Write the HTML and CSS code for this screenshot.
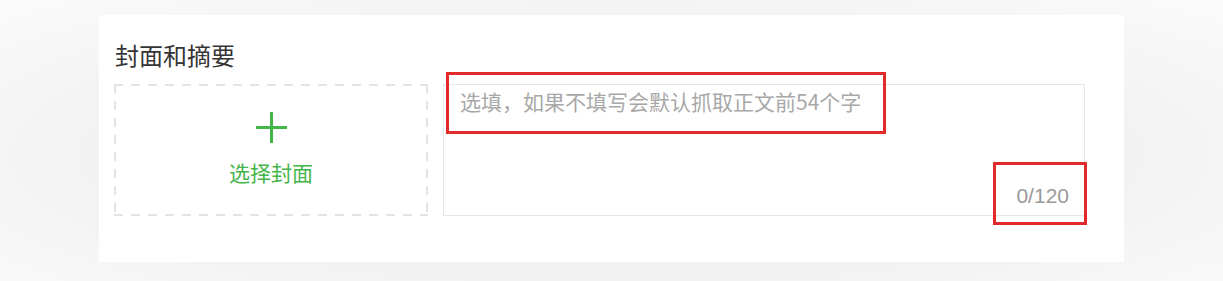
FILE: index.html
```html
<!DOCTYPE html>
<html>
<head>
    <meta charset="UTF-8">
    <title>封面和摘要</title>
    <link rel="stylesheet" href="styles.css">
</head>
<body>
    <div class="card">
        <h2 class="card-title">封面和摘要</h2>
        <div class="cover-row">
            <div class="cover-picker">
                <svg class="plus" width="31" height="31" viewBox="0 0 31 31">
                    <path d="M15.5 0 V31 M0 15.5 H31" stroke="#44b549" stroke-width="3" fill="none"/>
                </svg>
                <div class="cover-label">选择封面</div>
            </div>
            <div class="digest">
                <textarea class="digest-input" placeholder="选填，如果不填写会默认抓取正文前54个字"></textarea>
                <span class="digest-count">0/120</span>
                <!-- annotation marks -->
                <div class="mark mark-placeholder"></div>
                <div class="mark mark-count"></div>
            </div>
        </div>
    </div>
</body>
</html>
```

FILE: styles.css
```css
html, body {
    height: 100%;
}
body {
    margin: 0;
    font-family: "Noto Sans CJK SC", "Liberation Sans", sans-serif;
    background: radial-gradient(ellipse at 50% 55%, #f1f1f1 55%, #fbfbfb 100%);
    padding-top: 15px;
    box-sizing: border-box;
}
.card {
    margin-left: 99px;
    width: 1025px;
    height: 247px;
    box-sizing: border-box;
    padding: 25px 15px 0 15px;
    background: #fff;
}
.card-title {
    margin: 0 0 14px 1px;
    font-size: 24px;
    font-weight: normal;
    line-height: 30px;
    color: #353535;
}
.cover-row {
    display: flex;
    gap: 15px;
}
/* dashed border drawn with gradients to get longer dashes */
.cover-picker {
    width: 314px;
    height: 132px;
    box-sizing: border-box;
    padding-top: 28px;
    display: flex;
    flex-direction: column;
    align-items: center;
    background:
        repeating-linear-gradient(to right, #e3e3e3 0 9px, transparent 9px 17px) left top / 100% 2px no-repeat,
        repeating-linear-gradient(to right, #e3e3e3 0 9px, transparent 9px 17px) left bottom / 100% 2px no-repeat,
        repeating-linear-gradient(to bottom, #e3e3e3 0 9px, transparent 9px 17px) left top / 2px 100% no-repeat,
        repeating-linear-gradient(to bottom, #e3e3e3 0 9px, transparent 9px 17px) right top / 2px 100% no-repeat;
}
.cover-label {
    margin-top: 17px;
    font-size: 21px;
    line-height: 24px;
    color: #44b549;
}
.digest {
    position: relative;
    width: 642px;
    height: 132px;
}
.digest-input {
    display: block;
    width: 100%;
    height: 100%;
    box-sizing: border-box;
    margin: 0;
    border: 1px solid #e5e5e5;
    padding: 4px 16px;
    font-family: inherit;
    font-size: 21px;
    line-height: 24px;
    color: #353535;
    resize: none;
    outline: none;
}
.digest-input::placeholder {
    color: #a8a8a8;
}
.digest-count {
    position: absolute;
    right: 16px;
    bottom: 8px;
    font-family: "Liberation Sans", sans-serif;
    font-size: 21px;
    line-height: 24px;
    color: #9a9a9a;
}
.mark {
    position: absolute;
    border: 3px solid #e22a2a;
    box-sizing: border-box;
}
.mark-placeholder {
    left: 3px;
    top: -12px;
    width: 440px;
    height: 62px;
}
.mark-count {
    left: 550px;
    top: 78px;
    width: 94px;
    height: 63px;
}
```
